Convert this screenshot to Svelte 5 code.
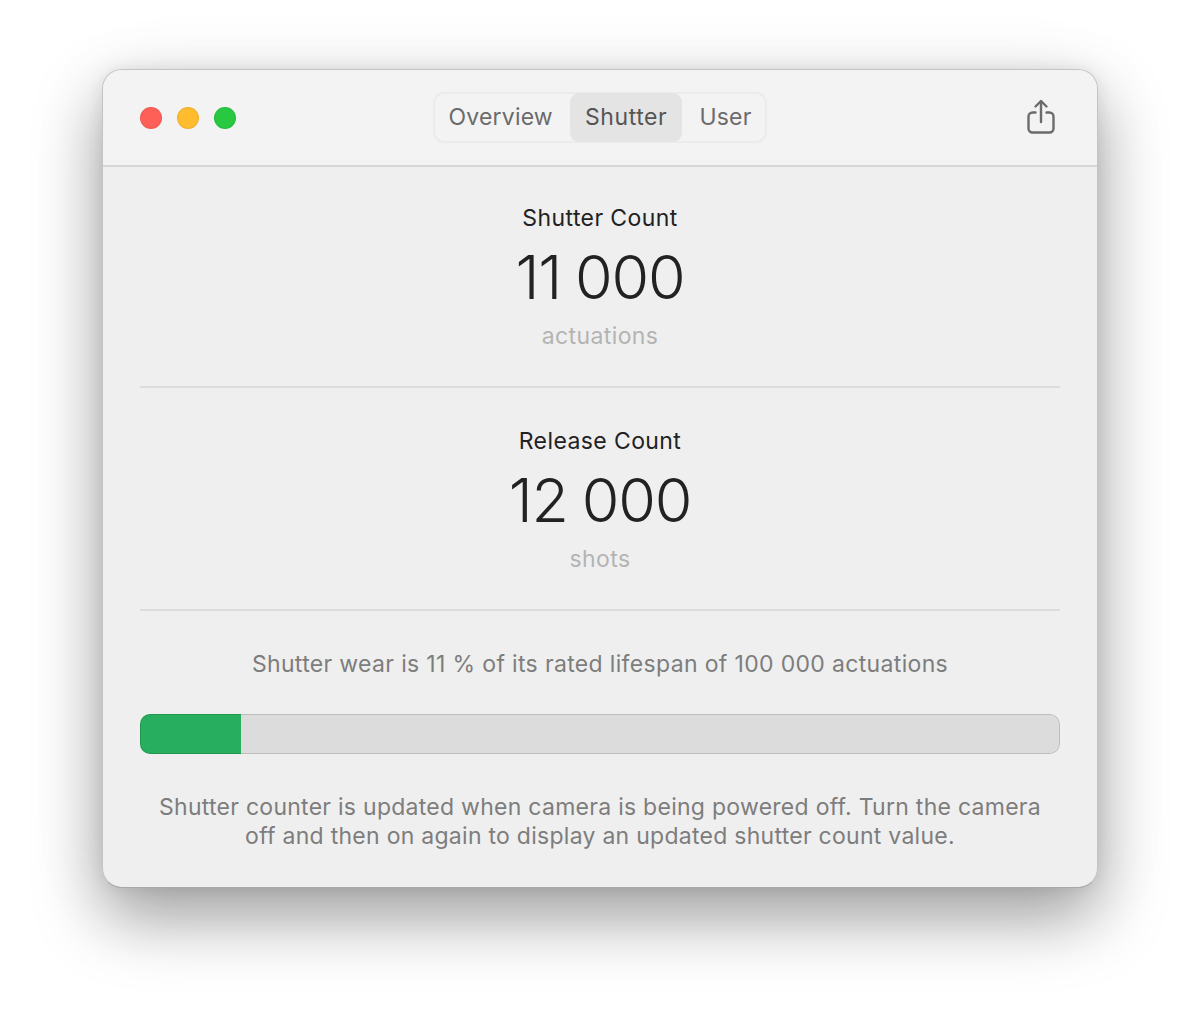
<script>
  const tabs = [
    { label: 'Overview', active: false },
    { label: 'Shutter', active: true },
    { label: 'User', active: false }
  ];
  const counters = [
    { title: 'Shutter Count', value: '11 000', unit: 'actuations' },
    { title: 'Release Count', value: '12 000', unit: 'shots' }
  ];
  const wear = 11;
</script>

<div class="page">
  <div class="window">
    <header class="titlebar">
      <div class="lights">
        <span class="light red"></span>
        <span class="light yellow"></span>
        <span class="light green"></span>
      </div>
      <nav class="tabs">
        {#each tabs as tab}
          <span class="tab" class:active={tab.active}>{tab.label}</span>
        {/each}
      </nav>
      <svg class="share" width="30" height="38" viewBox="0 0 30 38" fill="none" stroke="#6b6b6b" stroke-width="2.4" stroke-linecap="round" stroke-linejoin="round">
        <path d="M9.5 14.5H6.5a4 4 0 0 0-4 4v12a4 4 0 0 0 4 4h17a4 4 0 0 0 4-4v-12a4 4 0 0 0-4-4h-3" />
        <path d="M15 24V3.5" />
        <path d="M9.5 8.5 15 3l5.5 5.5" />
      </svg>
    </header>
    <main class="content">
      {#each counters as c}
        <section class="counter">
          <h2>{c.title}</h2>
          <div class="value">{c.value}</div>
          <div class="unit">{c.unit}</div>
        </section>
      {/each}
      <p class="wear">Shutter wear is 11 % of its rated lifespan of 100 000 actuations</p>
      <div class="bar"><div class="fill" style="width: {wear}%"></div></div>
      <p class="note">Shutter counter is updated when camera is being powered off. Turn the camera<br />off and then on again to display an updated shutter count value.</p>
    </main>
  </div>
</div>

<style>
  :global(body) {
    margin: 0;
    background: #fff;
  }
  .page {
    height: 1023px;
    padding-top: 69px;
    box-sizing: border-box;
    font-family: Inter, "Liberation Sans", sans-serif;
    overflow: hidden;
  }
  .window {
    width: 996px;
    height: 819px;
    box-sizing: border-box;
    margin: 0 auto;
    background: #efefef;
    border: 1px solid #c4c4c4;
    border-bottom-color: #a8a8a8;
    border-radius: 20px;
    box-shadow: 0 30px 66px rgba(0, 0, 0, 0.36), 0 0 16px rgba(0, 0, 0, 0.08), 0 10px 90px rgba(0, 0, 0, 0.05);
    overflow: hidden;
    display: flex;
    flex-direction: column;
  }
  .titlebar {
    height: 97px;
    flex: none;
    box-sizing: border-box;
    background: #f3f3f3;
    border-bottom: 2px solid #d6d6d6;
    display: grid;
    grid-template-columns: 1fr auto 1fr;
    align-items: center;
    padding: 0 37px;
  }
  .lights {
    display: flex;
    gap: 15px;
  }
  .light {
    width: 22px;
    height: 22px;
    border-radius: 50%;
    box-sizing: border-box;
    border: 1px solid rgba(0, 0, 0, 0.06);
  }
  .red { background: #fe5f57; }
  .yellow { background: #febc2e; }
  .green { background: #28c840; }
  .tabs {
    display: flex;
    height: 51px;
    box-sizing: border-box;
    border: 2px solid #ebebeb;
    border-radius: 11px;
  }
  .tab {
    display: flex;
    align-items: center;
    font-size: 23px;
    letter-spacing: 0.2px;
    color: #6b6b6b;
    padding: 0 15px;
    margin-top: -1px;
  }
  .tab:first-child { padding: 0 17px 0 13px; }
  .tab:last-child { padding: 0 13px 0 17px; }
  .tab.active {
    background: #e4e4e4;
    color: #555;
    border-radius: 9px;
    margin: -1px 0;
    padding: 0 15px 1px;
    letter-spacing: 0.6px;
  }
  .share {
    justify-self: end;
    margin-top: -2px;
    margin-right: 4px;
  }
  .content {
    flex: 1;
    padding: 0 37px;
    text-align: center;
  }
  .counter {
    height: 221px;
    border-bottom: 2px solid #dcdcdc;
    box-sizing: border-box;
    padding-top: 36px;
    margin-bottom: 2px;
  }
  h2 {
    margin: 0;
    font-size: 23px;
    letter-spacing: 0.4px;
    line-height: 30px;
    font-weight: 400;
    color: #222;
  }
  .value {
    font-size: 61px;
    font-weight: 300;
    line-height: 76px;
    margin-top: 6px;
    color: #222;
    letter-spacing: -1.2px;
    word-spacing: -2px;
  }
  .unit {
    font-size: 23px;
    letter-spacing: 0.4px;
    line-height: 30px;
    margin-top: 6px;
    color: #b4b4b4;
  }
  .wear {
    margin: 38px 0 0;
    font-size: 23px;
    letter-spacing: 0.34px;
    line-height: 30px;
    color: #7d7d7d;
  }
  .bar {
    position: relative;
    height: 40px;
    margin-top: 35px;
    background: #dcdcdc;
    border-radius: 10px;
    overflow: hidden;
  }
  .bar::after {
    content: "";
    position: absolute;
    inset: 0;
    border: 1px solid rgba(0, 0, 0, 0.14);
    border-radius: inherit;
  }
  .fill {
    height: 100%;
    background: #28ae5f;
  }
  .note {
    margin: 39px 0 0;
    font-size: 23px;
    letter-spacing: 0.27px;
    line-height: 29px;
    color: #7d7d7d;
  }
</style>
